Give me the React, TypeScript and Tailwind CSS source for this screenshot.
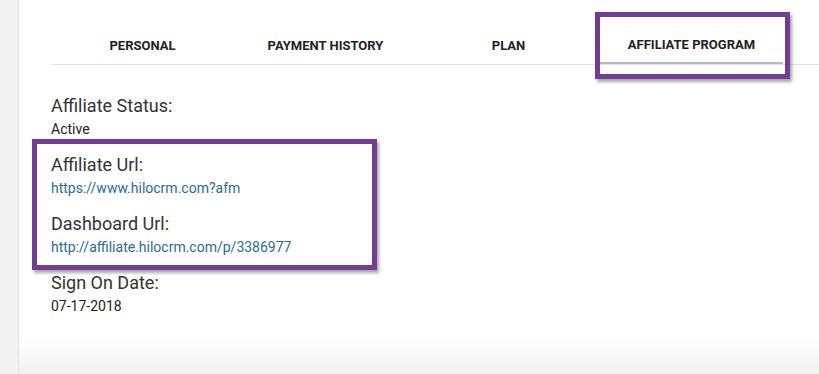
const TABS = ["Personal", "Payment History", "Plan", "Affiliate Program"];

const FIELDS = [
  { label: "Affiliate Status:", value: "Active" },
  { label: "Affiliate Url:", value: "https://www.hilocrm.com?afm", link: true },
  { label: "Dashboard Url:", value: "http://affiliate.hilocrm.com/p/3386977", link: true },
  { label: "Sign On Date:", value: "07-17-2018" },
];

const App = () => {
  return (
    <div className="relative flex h-[374px] w-[819px] overflow-hidden bg-white font-['Roboto',sans-serif]">
      {/* Left rail */}
      <div className="w-[19px] shrink-0 border-r border-[#e1e1e1] bg-[#f3f3f3]" />

      <div className="relative flex-1">
        {/* Tabs */}
        <div className="ml-[32px] mt-[28px] flex border-b border-[#e4e4e4]">
          {TABS.map((t, i) => (
            <div
              key={t}
              className={
                i === 3
                  ? "-mb-px flex h-[36px] w-[183px] items-center justify-center border-b-2 border-[#b3bac2] text-[13px] font-bold uppercase text-[#222]"
                  : "flex h-[36px] w-[183px] items-center justify-center text-[13px] font-bold uppercase text-[#222]"
              }
            >
              {t}
            </div>
          ))}
          <div className="flex-1" />
        </div>

        {/* Fields */}
        <div className="ml-[32px] mt-[30px] flex flex-col">
          {FIELDS.map((f) => (
            <div key={f.label} className="mb-[15px] flex flex-col">
              <div className="h-[22px] text-[18px] leading-[22px] text-[#333]">{f.label}</div>
              <div
                className={
                  f.link
                    ? "mt-[2px] h-[20px] text-[14px] leading-[20px] text-[#2a6d8d]"
                    : "mt-[2px] h-[20px] text-[14px] leading-[20px] text-[#222]"
                }
              >
                {f.value}
              </div>
            </div>
          ))}
        </div>

        {/* Bottom fade */}
        <div className="absolute bottom-0 left-0 right-0 h-[36px] bg-gradient-to-b from-white to-[#f1f1f1]" />
      </div>

      {/* Highlight boxes */}
      <div className="absolute left-[595px] top-[12px] h-[67px] w-[195px] border-[5px] border-[#733c97] shadow-[2px_3px_3px_rgba(0,0,0,0.35)]" />
      <div className="absolute left-[32px] top-[139px] h-[131px] w-[345px] border-[5px] border-[#733c97] shadow-[2px_3px_3px_rgba(0,0,0,0.35)]" />
    </div>
  );
};

export default App;
